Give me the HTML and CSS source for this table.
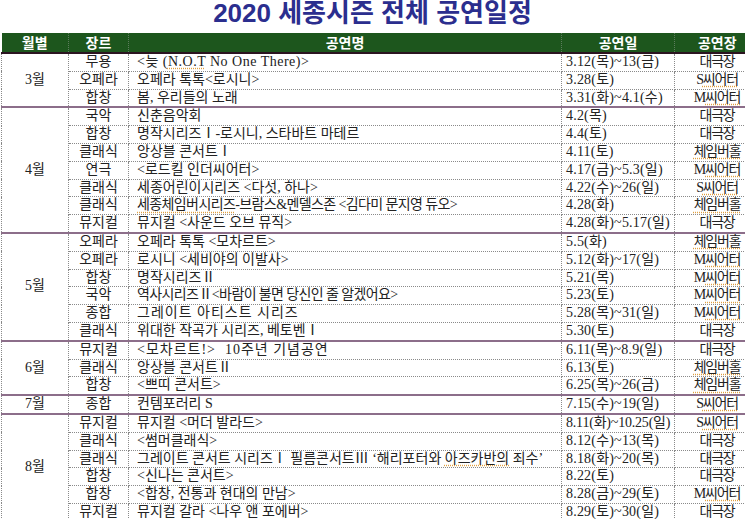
FILE: index.html
```html
<!DOCTYPE html>
<html lang="ko">
<head>
<meta charset="utf-8">
<title>2020 세종시즌 전체 공연일정</title>
<link rel="stylesheet" href="styles.css">
</head>
<body>
<h1 class="title">2020 세종시즌 전체 공연일정</h1>
<table class="schedule">
  <colgroup>
    <col class="c-month"><col class="c-genre"><col class="c-name"><col class="c-date"><col class="c-venue">
  </colgroup>
  <thead>
    <tr><th>월별</th><th>장르</th><th>공연명</th><th>공연일</th><th>공연장</th></tr>
  </thead>
  <tbody>
    <tr class="grp"><td class="month" rowspan="3">3월</td><td class="genre">무용</td><td class="name wide">&lt;늦 (<span class="sp">N.O.T</span> No One There)&gt;</td><td class="date">3.12(목)~13(금)</td><td class="venue">대극장</td></tr>
    <tr><td class="genre">오페라</td><td class="name">오페라 톡톡&lt;로시니&gt;</td><td class="date">3.28(토)</td><td class="venue">S<span class="sp">씨어터</span></td></tr>
    <tr><td class="genre">합창</td><td class="name">봄, 우리들의 노래</td><td class="date">3.31(화)~4.1(수)</td><td class="venue">M<span class="sp">씨어터</span></td></tr>

    <tr class="grp"><td class="month" rowspan="7">4월</td><td class="genre">국악</td><td class="name">신춘음악회</td><td class="date">4.2(목)</td><td class="venue">대극장</td></tr>
    <tr><td class="genre">합창</td><td class="name">명작시리즈Ⅰ-로시니, 스타바트 마테르</td><td class="date">4.4(토)</td><td class="venue">대극장</td></tr>
    <tr><td class="genre">클래식</td><td class="name">앙상블 콘서트Ⅰ</td><td class="date">4.11(토)</td><td class="venue"><span class="sp">체임버홀</span></td></tr>
    <tr><td class="genre">연극</td><td class="name">&lt;로드킬 인더씨어터&gt;</td><td class="date">4.17(금)~5.3(일)</td><td class="venue">M<span class="sp">씨어터</span></td></tr>
    <tr><td class="genre">클래식</td><td class="name">세종어린이시리즈 &lt;다섯, 하나&gt;</td><td class="date">4.22(수)~26(일)</td><td class="venue">S<span class="sp">씨어터</span></td></tr>
    <tr><td class="genre">클래식</td><td class="name tight"><span class="sp">세종체임버시리즈</span>-브람스&amp;멘델스존 &lt;김다미 문지영 듀오&gt;</td><td class="date">4.28(화)</td><td class="venue"><span class="sp">체임버홀</span></td></tr>
    <tr><td class="genre">뮤지컬</td><td class="name">뮤지컬 &lt;사운드 오브 뮤직&gt;</td><td class="date">4.28(화)~5.17(일)</td><td class="venue">대극장</td></tr>

    <tr class="grp"><td class="month" rowspan="6">5월</td><td class="genre">오페라</td><td class="name">오페라 톡톡 &lt;모차르트&gt;</td><td class="date">5.5(화)</td><td class="venue"><span class="sp">체임버홀</span></td></tr>
    <tr><td class="genre">오페라</td><td class="name">로시니 &lt;세비야의 이발사&gt;</td><td class="date">5.12(화)~17(일)</td><td class="venue">M<span class="sp">씨어터</span></td></tr>
    <tr><td class="genre">합창</td><td class="name">명작시리즈Ⅱ</td><td class="date">5.21(목)</td><td class="venue">M<span class="sp">씨어터</span></td></tr>
    <tr><td class="genre">국악</td><td class="name tight">역사시리즈Ⅱ&lt;바람이 불면 당신인 줄 알겠어요&gt;</td><td class="date">5.23(토)</td><td class="venue">M<span class="sp">씨어터</span></td></tr>
    <tr><td class="genre">종합</td><td class="name spaced">그레이트 아티스트 시리즈</td><td class="date">5.28(목)~31(일)</td><td class="venue">M<span class="sp">씨어터</span></td></tr>
    <tr><td class="genre">클래식</td><td class="name">위대한 작곡가 시리즈, 베토벤Ⅰ</td><td class="date">5.30(토)</td><td class="venue">대극장</td></tr>

    <tr class="grp"><td class="month" rowspan="3">6월</td><td class="genre">뮤지컬</td><td class="name spaced">&lt;모차르트!&gt;&nbsp; 10주년 기념공연</td><td class="date">6.11(목)~8.9(일)</td><td class="venue">대극장</td></tr>
    <tr><td class="genre">클래식</td><td class="name">앙상블 콘서트Ⅱ</td><td class="date">6.13(토)</td><td class="venue"><span class="sp">체임버홀</span></td></tr>
    <tr><td class="genre">합창</td><td class="name">&lt;쁘띠 콘서트&gt;</td><td class="date">6.25(목)~26(금)</td><td class="venue"><span class="sp">체임버홀</span></td></tr>

    <tr class="grp"><td class="month">7월</td><td class="genre">종합</td><td class="name">컨템포러리 S</td><td class="date">7.15(수)~19(일)</td><td class="venue">S<span class="sp">씨어터</span></td></tr>

    <tr class="grp"><td class="month" rowspan="6">8월</td><td class="genre">뮤지컬</td><td class="name">뮤지컬 &lt;머더 발라드&gt;</td><td class="date long">8.11(화)~10.25(일)</td><td class="venue">S<span class="sp">씨어터</span></td></tr>
    <tr><td class="genre">클래식</td><td class="name">&lt;썸머클래식&gt;</td><td class="date">8.12(수)~13(목)</td><td class="venue">대극장</td></tr>
    <tr><td class="genre">클래식</td><td class="name">그레이트 콘서트 시리즈Ⅰ 필름콘서트Ⅲ ‘해리포터와 <span class="sp">아즈카반의</span> 죄수’</td><td class="date">8.18(화)~20(목)</td><td class="venue">대극장</td></tr>
    <tr><td class="genre">합창</td><td class="name">&lt;신나는 콘서트&gt;</td><td class="date">8.22(토)</td><td class="venue">대극장</td></tr>
    <tr><td class="genre">합창</td><td class="name">&lt;합창, 전통과 현대의 만남&gt;</td><td class="date">8.28(금)~29(토)</td><td class="venue">M<span class="sp">씨어터</span></td></tr>
    <tr><td class="genre">뮤지컬</td><td class="name">뮤지컬 갈라 &lt;나우 앤 포에버&gt;</td><td class="date">8.29(토)~30(일)</td><td class="venue">대극장</td></tr>
  </tbody>
</table>
</body>
</html>
```
FILE: styles.css
```css
html { overflow: hidden; background: #fff; }
body {
  margin: 0;
  width: 760px;
  font-family: "Liberation Serif", "Noto Sans CJK KR", serif;
  color: #222;
}
.title {
  margin: 0;
  width: 745px;
  height: 33px;
  font-family: "Liberation Sans", "Noto Sans CJK KR", sans-serif;
  font-size: 26px;
  font-weight: bold;
  line-height: 27px;
  color: #2b2e8e;
  text-align: center;
}
.schedule {
  margin-left: 1px;
  border-collapse: collapse;
  table-layout: fixed;
  width: 758px;
  font-size: 14px;
}
.c-month { width: 67px; }
.c-genre { width: 60px; }
.c-name { width: 433px; }
.c-date { width: 113px; }
.c-venue { width: 85px; }
.schedule th {
  background: #1d561d;
  color: #fff;
  font-family: "Noto Sans CJK KR", sans-serif;
  font-weight: bold;
  font-size: 14px;
  height: 19px;
  line-height: 19px;
  padding: 0;
  border-bottom: 2px solid #2b1420;
  border-left: 1px dotted #5d7d5d;
  text-align: center;
}
.schedule th:first-child { border-left: none; }
.schedule td {
  padding: 0;
  height: 16.8px;
  line-height: 16.8px;
  border: 1px dotted #8a8a8a;
  white-space: nowrap;
  overflow: hidden;
}
.schedule tr.grp td { border-top: 2px solid #8c6e8a; }
.month { text-align: center; vertical-align: middle; }
.genre { text-align: center; }
.name { padding-left: 8px !important; }
.name.wide { letter-spacing: 0.5px; }
.name.tight { letter-spacing: -0.6px; }
.name.spaced { letter-spacing: 1px; }
.date { padding-left: 4px !important; letter-spacing: 0.2px; }
.date.long { letter-spacing: -0.2px; }
.venue { text-align: center; letter-spacing: -1.2px; }
.sp {
  text-decoration: underline dotted #e0a040;
  text-underline-offset: 2px;
}
```
